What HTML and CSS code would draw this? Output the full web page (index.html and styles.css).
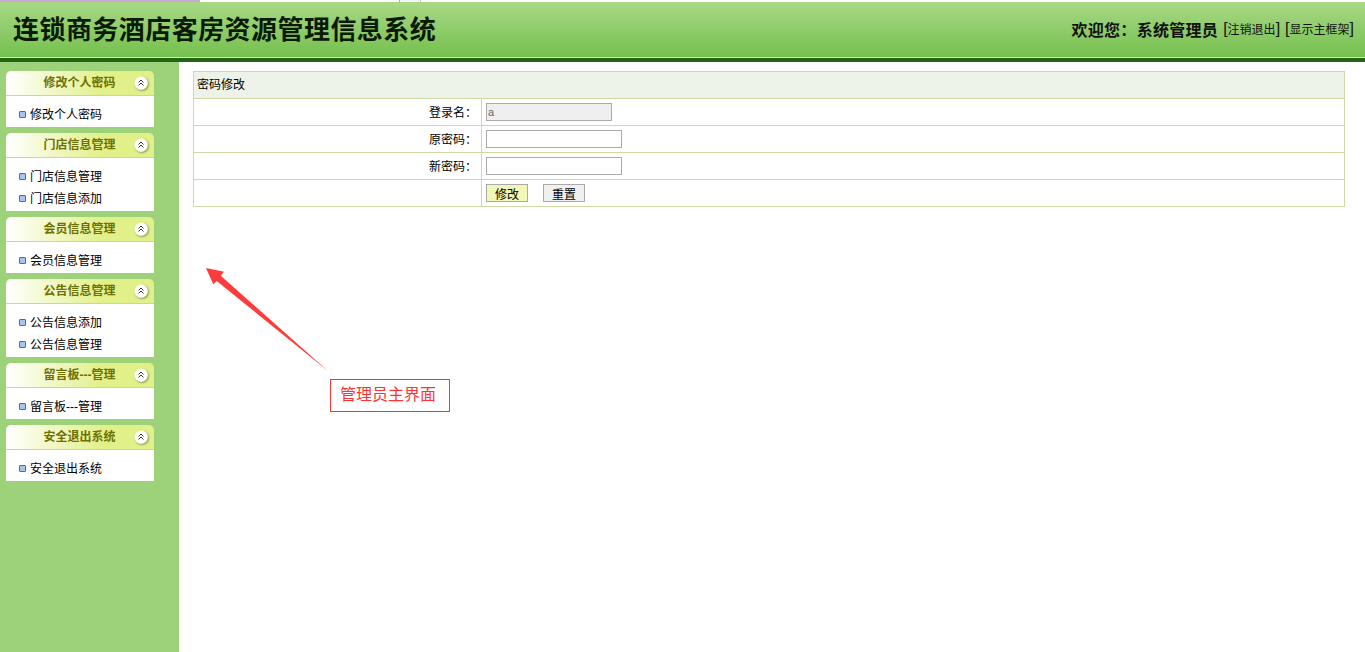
FILE: index.html
```html
<!DOCTYPE html>
<html lang="zh-CN">
<head>
<meta charset="utf-8">
<title>连锁商务酒店客房资源管理信息系统</title>
<link rel="stylesheet" href="styles.css">
</head>
<body>
<div class="strip"><span class="strip-a"></span><span class="strip-b"></span><span class="strip-c"></span></div>
<header class="top">
  <h1 class="title">连锁商务酒店客房资源管理信息系统</h1>
  <div class="welcome"><b>欢迎您&#xFF1A;系统管理员</b> <span class="lnk"><i>[</i>注销退出<i>]</i></span> <span class="lnk"><i>[</i>显示主框架<i>]</i></span></div>
</header>
<div class="rule"></div>
<div class="layout">
  <aside class="side">
    <section class="panel"><div class="phead">修改个人密码<svg class="tog" viewBox="0 0 14 14"><circle cx="7" cy="7" r="6.500" fill="#fff"/><path d="M4.500 6.500 7 4l2.500 2.500M4.500 9.500 7 7l2.500 2.500" fill="none" stroke="#333" stroke-width="1"/></svg></div><ul class="pbody"><li>修改个人密码</li></ul></section>
    <section class="panel"><div class="phead">门店信息管理<svg class="tog" viewBox="0 0 14 14"><circle cx="7" cy="7" r="6.500" fill="#fff"/><path d="M4.500 6.500 7 4l2.500 2.500M4.500 9.500 7 7l2.500 2.500" fill="none" stroke="#333" stroke-width="1"/></svg></div><ul class="pbody"><li>门店信息管理</li><li>门店信息添加</li></ul></section>
    <section class="panel"><div class="phead">会员信息管理<svg class="tog" viewBox="0 0 14 14"><circle cx="7" cy="7" r="6.500" fill="#fff"/><path d="M4.500 6.500 7 4l2.500 2.500M4.500 9.500 7 7l2.500 2.500" fill="none" stroke="#333" stroke-width="1"/></svg></div><ul class="pbody"><li>会员信息管理</li></ul></section>
    <section class="panel"><div class="phead">公告信息管理<svg class="tog" viewBox="0 0 14 14"><circle cx="7" cy="7" r="6.500" fill="#fff"/><path d="M4.500 6.500 7 4l2.500 2.500M4.500 9.500 7 7l2.500 2.500" fill="none" stroke="#333" stroke-width="1"/></svg></div><ul class="pbody"><li>公告信息添加</li><li>公告信息管理</li></ul></section>
    <section class="panel"><div class="phead">留言板---管理<svg class="tog" viewBox="0 0 14 14"><circle cx="7" cy="7" r="6.500" fill="#fff"/><path d="M4.500 6.500 7 4l2.500 2.500M4.500 9.500 7 7l2.500 2.500" fill="none" stroke="#333" stroke-width="1"/></svg></div><ul class="pbody"><li>留言板---管理</li></ul></section>
    <section class="panel"><div class="phead">安全退出系统<svg class="tog" viewBox="0 0 14 14"><circle cx="7" cy="7" r="6.500" fill="#fff"/><path d="M4.500 6.500 7 4l2.500 2.500M4.500 9.500 7 7l2.500 2.500" fill="none" stroke="#333" stroke-width="1"/></svg></div><ul class="pbody"><li>安全退出系统</li></ul></section>
  </aside>
  <main class="main">
    <div class="form">
      <div class="frow fhead">密码修改</div>
      <div class="frow"><div class="flabel">登录名&#xFF1A;</div><div class="fval"><input class="inp short" value="a" disabled></div></div>
      <div class="frow"><div class="flabel">原密码&#xFF1A;</div><div class="fval"><input class="inp" type="password"></div></div>
      <div class="frow"><div class="flabel">新密码&#xFF1A;</div><div class="fval"><input class="inp" type="password"></div></div>
      <div class="frow"><div class="flabel"></div><div class="fval btns"><button class="btn primary">修改</button><button class="btn">重置</button></div></div>
    </div>
  </main>
</div>
<svg class="arrow" viewBox="0 0 130 110" width="130" height="110"><polygon points="1,3 19,6.700 15.700,10.700 123,106 11.700,16 8.300,19.300" fill="#ff3b3b"/></svg>
<div class="note">管理员主界面</div>
</body>
</html>
```
FILE: styles.css
```css
*, *::before { box-sizing: border-box; }
html, body { margin: 0; height: 100%; }
body { font-family: "Liberation Sans", "Noto Sans CJK SC", sans-serif; font-size: 12px; color: #000; background: #fff; overflow: hidden; }
.strip { height: 2px; display: flex; background: #fff; }
.strip-a { width: 200px; background: #c9a6d6; }
.strip-b { width: 199px; background: #fff; }
.strip-c { width: 22px; background: #f4f4f4; border-left: 1px solid #aaa; border-right: 1px solid #ccc; }
.top { height: 56px; display: flex; align-items: center; justify-content: space-between; padding: 0 11px 0 13px; background: linear-gradient(#a9d886, #74c04e); border-bottom: 1px solid #d6ecc4; }
.title { margin: 0; font-size: 26px; font-weight: 700; letter-spacing: 0.45px; line-height: 30px; color: #0b1a05; }
.welcome { font-size: 12px; display: flex; align-items: center; gap: 5px; margin-bottom: 2px; color: #111; }
.welcome b { font-size: 16px; font-weight: 700; letter-spacing: 0.3px; }
.lnk i { font-style: normal; font-size: 16px; }
.rule { height: 4px; background: #22650f; }
.layout { display: flex; height: 590px; }
.side { width: 179px; flex: none; background: #9dd27a; padding: 9px 25px 0 6px; display: flex; flex-direction: column; gap: 6px; }
.panel { width: 148px; }
.phead { position: relative; height: 25px; line-height: 24px; padding-right: 1px; text-align: center; font-weight: 700; color: #6e7000; background: linear-gradient(90deg, #fff, #e2f08a 65%); border-bottom: 1px solid #c9d6a0; border-radius: 5px 5px 0 0; }
.tog { position: absolute; right: 6px; top: 5px; width: 14px; height: 14px; border-radius: 50%; box-shadow: 1px 1px 2px #8f9a70; }
.pbody { margin: 0; padding: 7px 0 2px; list-style: none; background: #fff; }
.pbody li { height: 22px; line-height: 24px; padding-left: 24px; position: relative; }
.pbody li::before { content: ""; position: absolute; left: 13px; top: 8px; width: 7px; height: 7px; border: 1px solid #5a6a80; border-radius: 1px; background: #a9c4ee; }
.main { flex: 1; padding: 9px 20px 0 14px; }
.form { border: 1px solid #cfd9a8; border-bottom: 0; }
.frow { height: 27px; display: flex; border-bottom: 1px solid #cfd9a8; }
.fhead { background: #edf3e8; line-height: 26px; padding-left: 3px; display: block; }
.flabel { width: 288px; flex: none; line-height: 28px; text-align: right; padding-right: 4px; border-right: 1px solid #cfd9a8; }
.fval { flex: 1; padding: 4px 0 0 4px; }
.inp { display: block; width: 136px; height: 18px; padding: 0 1px; border: 1px solid #aaa; background: #fff; font: 11px "Liberation Sans", sans-serif; color: #666; }
.inp.short { width: 126px; background: #efefef; }
.btns { display: flex; gap: 15px; }
.btn { width: 42px; height: 18px; padding: 0; border: 1px solid #aaa; background: #f0f0f0; font: 12px "Liberation Sans", "Noto Sans CJK SC", sans-serif; color: #000; }
.btn.primary { background: #f1f7b4; }
.arrow { position: absolute; left: 205px; top: 265px; }
.note { position: absolute; left: 330px; top: 379px; width: 120px; height: 33px; padding-right: 4px; border: 1px solid #f33; color: #f33; font-size: 16px; line-height: 30px; text-align: center; background: #fff; }
```
